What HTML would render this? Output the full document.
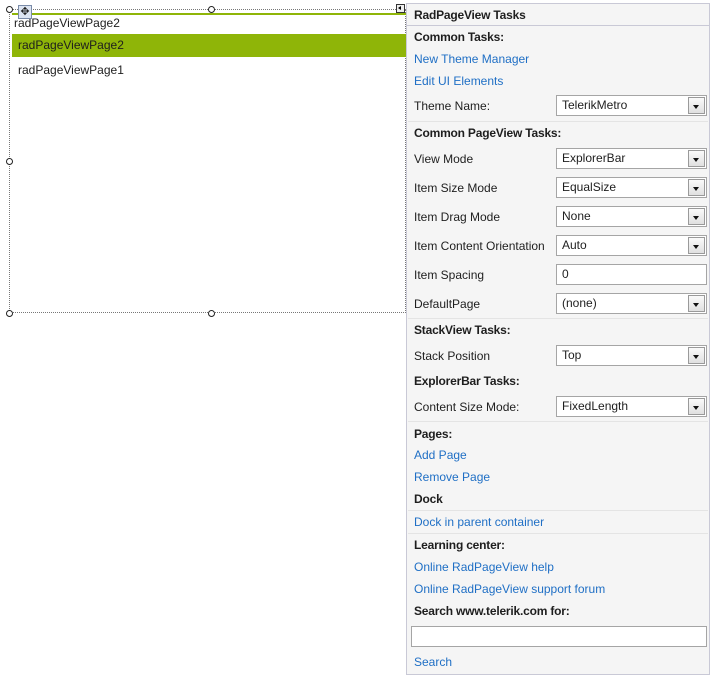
<!DOCTYPE html>
<html><head><style>
body{margin:0;width:723px;height:686px;background:#fff;position:relative;overflow:hidden;font-family:"Liberation Sans",sans-serif;font-size:12px;color:#1e1e1e}
.a{position:absolute;white-space:nowrap;line-height:14px}
.b{font-weight:bold;letter-spacing:-0.2px}
.l{color:#1f6fc5}
.sep{position:absolute;left:408px;width:300px;height:1px;background:#e4e4e4}
.dd{position:absolute;left:556px;width:149px;height:19px;border:1px solid #a5a5a5;background:#fff}
.dd span{position:absolute;left:5px;top:2px;line-height:14px}
.dd i{position:absolute;right:1px;top:1px;width:17px;height:17px;border:1px solid #9a9a9a;background:linear-gradient(#fafafa,#e0e0e0);box-sizing:border-box}
.dd i:after{content:"";position:absolute;left:4px;top:7px;border-left:3.5px solid transparent;border-right:3.5px solid transparent;border-top:4px solid #111}
.h{position:absolute;width:5px;height:5px;border:1px solid #222;border-radius:50%;background:#fff}
</style></head><body>
<div style="position:absolute;left:9px;top:9px;width:397px;height:304px;border:1px dotted #777;box-sizing:border-box"></div>
<div style="position:absolute;left:12px;top:13px;width:394px;height:2px;background:#8fb508"></div>
<div style="position:absolute;left:12px;top:34px;width:394px;height:23px;background:#8fb508"></div>
<div class="a" style="left:14px;top:16px">radPageViewPage2</div>
<div class="a" style="left:18px;top:38px;color:#1e1e1e">radPageViewPage2</div>
<div class="a" style="left:18px;top:63px">radPageViewPage1</div>
<div class="h" style="left:6px;top:6px"></div>
<div class="h" style="left:208px;top:6px"></div>
<div class="h" style="left:6px;top:158px"></div>
<div class="h" style="left:6px;top:310px"></div>
<div class="h" style="left:208px;top:310px"></div>
<div style="position:absolute;left:18px;top:5px;width:14px;height:14px;border:1px solid #7a8ba8;background:#dde5f2;box-sizing:border-box;font-size:11px;line-height:12px;text-align:center">✥</div>
<div style="position:absolute;left:396px;top:4px;width:9px;height:9px;border:1px solid #333;background:#eee;box-sizing:border-box"></div>
<div style="position:absolute;left:398px;top:6px;border-top:2.5px solid transparent;border-bottom:2.5px solid transparent;border-right:3px solid #000"></div>
<div style="position:absolute;left:406px;top:3px;width:304px;height:672px;background:#f5f5f5;border:1px solid #c9c9d6;box-sizing:border-box"></div>
<div class="a b" style="left:414px;top:8px">RadPageView Tasks</div>
<div style="position:absolute;left:407px;top:25px;width:302px;height:1px;background:#c9c9d6"></div>
<div class="a b" style="left:414px;top:30px">Common Tasks:</div>
<div class="a l" style="left:414px;top:52px">New Theme Manager</div>
<div class="a l" style="left:414px;top:74px">Edit UI Elements</div>
<div class="a" style="left:414px;top:99px">Theme Name:</div>
<div class="dd" style="top:95px"><span>TelerikMetro</span><i></i></div>
<div class="sep" style="top:121px"></div>
<div class="a b" style="left:414px;top:126px">Common PageView Tasks:</div>
<div class="a" style="left:414px;top:152px">View Mode</div>
<div class="dd" style="top:148px"><span>ExplorerBar</span><i></i></div>
<div class="a" style="left:414px;top:181px">Item Size Mode</div>
<div class="dd" style="top:177px"><span>EqualSize</span><i></i></div>
<div class="a" style="left:414px;top:210px">Item Drag Mode</div>
<div class="dd" style="top:206px"><span>None</span><i></i></div>
<div class="a" style="left:414px;top:239px">Item Content Orientation</div>
<div class="dd" style="top:235px"><span>Auto</span><i></i></div>
<div class="a" style="left:414px;top:268px">Item Spacing</div>
<div class="dd" style="top:264px"><span>0</span></div>
<div class="a" style="left:414px;top:297px">DefaultPage</div>
<div class="dd" style="top:293px"><span>(none)</span><i></i></div>
<div class="sep" style="top:318px"></div>
<div class="a b" style="left:414px;top:323px">StackView Tasks:</div>
<div class="a" style="left:414px;top:349px">Stack Position</div>
<div class="dd" style="top:345px"><span>Top</span><i></i></div>
<div class="a b" style="left:414px;top:374px">ExplorerBar Tasks:</div>
<div class="a" style="left:414px;top:400px">Content Size Mode:</div>
<div class="dd" style="top:396px"><span>FixedLength</span><i></i></div>
<div class="sep" style="top:421px"></div>
<div class="a b" style="left:414px;top:427px">Pages:</div>
<div class="a l" style="left:414px;top:448px">Add Page</div>
<div class="a l" style="left:414px;top:470px">Remove Page</div>
<div class="a b" style="left:414px;top:492px">Dock</div>
<div class="sep" style="top:510px"></div>
<div class="a l" style="left:414px;top:515px">Dock in parent container</div>
<div class="sep" style="top:533px"></div>
<div class="a b" style="left:414px;top:538px">Learning center:</div>
<div class="a l" style="left:414px;top:560px">Online RadPageView help</div>
<div class="a l" style="left:414px;top:582px">Online RadPageView support forum</div>
<div class="a b" style="left:414px;top:604px">Search www.telerik.com for:</div>
<div style="position:absolute;left:411px;top:626px;width:296px;height:21px;border:1px solid #a5a5a5;background:#fff;box-sizing:border-box"></div>
<div class="a l" style="left:414px;top:655px">Search</div>
</body></html>
